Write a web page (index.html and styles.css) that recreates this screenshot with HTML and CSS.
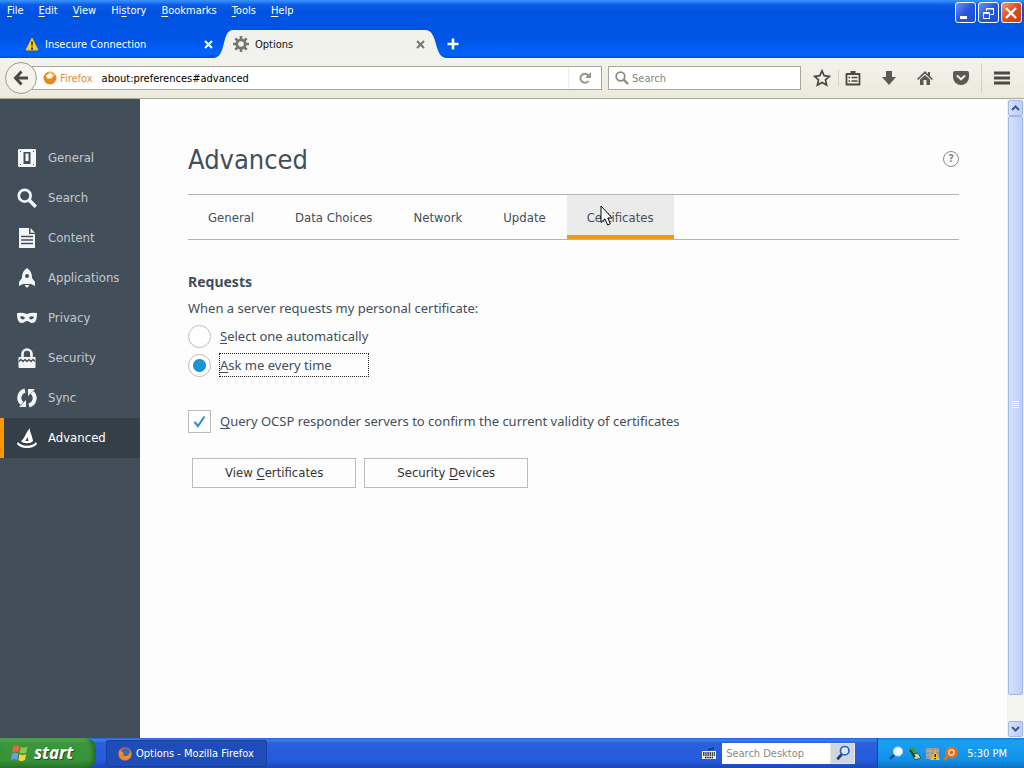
FILE: index.html
```html
<!DOCTYPE html>
<html lang="en">
<head>
<meta charset="utf-8">
<meta name="viewport" content="width=device-width, initial-scale=1">
<title>Options</title>
<link rel="stylesheet" href="styles.css">
</head>
<body>
<header class="titlebar">
  <div class="menurow">
    <nav class="menus">
      <button><u>F</u>ile</button>
      <button><u>E</u>dit</button>
      <button><u>V</u>iew</button>
      <button>Hi<u>s</u>tory</button>
      <button><u>B</u>ookmarks</button>
      <button><u>T</u>ools</button>
      <button><u>H</u>elp</button>
    </nav>
    <div class="winbtns">
      <button class="winbtn" aria-label="Minimize"><svg width="18" height="18"><rect x="4" y="12" width="7" height="3" fill="#fff"/></svg></button>
      <button class="winbtn" aria-label="Restore"><svg width="18" height="18" fill="none" stroke="#fff"><path d="M7.500 7V4.500h7v6h-3M7 5h8"/><path d="M4.500 8.500h6v6h-6zM4 9.500h7"/></svg></button>
      <button class="winbtn winbtn-close" aria-label="Close"><svg width="18" height="18" stroke="#fff" stroke-width="2.400"><path d="M4 4l10 10M14 4L4 14"/></svg></button>
    </div>
  </div>
  <div class="tabrow">
    <div class="tab">
      <svg width="14" height="14" viewBox="0 0 14 14"><path d="M7 1L13 13H1z" fill="#fbd130" stroke="#e8b820" stroke-linejoin="round"/><path d="M6 4.500h2L7.500 9.500h-1zM6 10.500h2v2H6z" fill="#3a3216"/></svg>
      <button class="tab-label">Insecure Connection</button>
      <button class="tab-close" aria-label="Close tab"><svg width="9" height="9" stroke="#fff" stroke-width="2"><path d="M1 1l7 7M8 1L1 8"/></svg></button>
    </div>
    <div class="tab tab-active">
      <svg class="curve" width="20" height="28" viewBox="0 0 20 28"><path d="M0 28C14 28 8 0 20 0V28z" fill="#f2f2ec"/></svg>
      <div class="tab-body">
        <svg width="16" height="16" viewBox="0 0 16 16"><circle cx="8" cy="8" r="4.200" fill="none" stroke="#76766f" stroke-width="2.800"/><path d="M8 0v3M8 13v3M0 8h3M13 8h3M2.300 2.300l2.200 2.200M11.500 11.500l2.200 2.200M13.700 2.300l-2.200 2.200M4.500 11.500l-2.200 2.200" stroke="#76766f" stroke-width="2.600"/></svg>
        <button class="tab-label">Options</button>
        <button class="tab-close" aria-label="Close tab"><svg width="9" height="9" stroke="#77776f" stroke-width="2"><path d="M1 1l7 7M8 1L1 8"/></svg></button>
      </div>
      <svg class="curve" width="22" height="28" viewBox="0 0 22 28"><path d="M0 0C14 0 8 28 22 28H0z" fill="#f2f2ec"/></svg>
    </div>
    <button class="newtab" aria-label="New tab"><svg width="12" height="12" stroke="#fff" stroke-width="2.600"><path d="M6 .5v11M.5 6h11"/></svg></button>
  </div>
</header>

<div class="toolbar">
  <div class="address">
    <button class="back" aria-label="Back"><svg width="16" height="16" viewBox="0 0 16 16" fill="none" stroke="#4b4a42" stroke-width="3"><path d="M15 8H3M8.500 1.500L2.500 8l6 6.500"/></svg></button>
    <div class="urlbox">
      <svg width="14" height="14" viewBox="0 0 14 14"><circle cx="7" cy="7" r="6.500" fill="#e68a1e"/><path d="M3 4c2 0 2-2 5-2 2 0 3 3 1 5-2 1-3 0-4 1-1-1-2-2-2-4z" fill="#fff6e4"/><path d="M5 1.500C8 0 12 2 12.500 6L10 4z" fill="#f7c56c"/></svg>
      <span class="identity">Firefox</span>
      <input class="url" type="text" aria-label="Address" value="about:preferences#advanced">
      <button class="reload" aria-label="Reload"><svg width="14" height="14" viewBox="0 0 14 14"><path d="M10.500 10A4.500 4.500 0 1 1 10.500 4.500" fill="none" stroke="#95958f" stroke-width="2"/><path d="M13 1v6H7z" fill="#95958f"/></svg></button>
    </div>
  </div>
  <label class="searchbox">
    <svg width="14" height="14" viewBox="0 0 14 14" fill="none" stroke="#8b8b87"><circle cx="5.500" cy="5.500" r="4.300" stroke-width="1.800"/><path d="M8.500 8.500l4.500 4.500" stroke-width="2.400"/></svg>
    <input type="text" placeholder="Search" aria-label="Search">
  </label>
  <div class="tools">
    <button aria-label="Bookmark"><svg width="18" height="18" viewBox="0 0 18 18"><path d="M9 1.800l2.200 4.900 5.200.6-3.900 3.500 1.100 5.200L9 13.400 4.400 16l1.100-5.200L1.600 7.300l5.200-.6z" fill="none" stroke="#4b4a42" stroke-width="1.700"/></svg></button>
    <span class="sep"></span>
    <button aria-label="Bookmarks list"><svg width="16" height="16" viewBox="0 0 16 16"><path d="M1.500 4h13v10.500h-13z" fill="none" stroke="#4b4a42" stroke-width="1.800" stroke-linejoin="round"/><path d="M5.500 3V1h5v2z" fill="#4b4a42"/><path d="M3.500 7.500H5M6.500 7.500h6M3.500 11H5M6.500 11h6" stroke="#4b4a42" stroke-width="1.500"/></svg></button>
    <button aria-label="Downloads"><svg width="16" height="16" viewBox="0 0 16 16"><path d="M5 1h6v6h4l-7 8-7-8h4z" fill="#5b5a52"/></svg></button>
    <button aria-label="Home"><svg width="16" height="16" viewBox="0 0 16 16" fill="#5b5a52"><path d="M8 1L0 9l1.200 1L8 3.600 14.800 10 16 9l-3-3V2h-2v2z"/><path d="M3 9.500L8 5l5 4.500V15H9.500v-5h-3v5H3z"/></svg></button>
    <button aria-label="Pocket"><svg width="16" height="16" viewBox="0 0 16 16"><path d="M2 1h12q2 0 2 2v4a8 8 0 0 1-16 0V3q0-2 2-2z" fill="#5b5a52"/><path d="M4.500 6L8 9.300 11.500 6" fill="none" stroke="#efeee6" stroke-width="2" stroke-linecap="round"/></svg></button>
    <span class="sep sep-menu"></span>
    <button class="menu" aria-label="Menu"><svg width="16" height="14" stroke="#4b4a42" stroke-width="3"><path d="M0 2h16M0 7h16M0 12h16"/></svg></button>
  </div>
</div>

<main class="view">
  <nav class="sidebar">
    <a href="#general"><svg viewBox="0 0 20 20" fill="#f4f6f8"><path fill-rule="evenodd" d="M2 1h16q1 0 1 1v16q0 1-1 1H2q-1 0-1-1V2q0-1 1-1zM6.500 4v12h7V4zM3 3v1h1V3zM16 3v1h1V3zM3 16v1h1v-1zM16 16v1h1v-1z"/><path d="M8.500 5.500h3V13h-3z"/></svg>General</a>
    <a href="#search"><svg viewBox="0 0 20 20" fill="none" stroke="#f4f6f8"><circle cx="7.700" cy="7.700" r="5.900" stroke-width="2.700"/><path d="M12 12l6.800 6.800" stroke-width="3.500"/></svg>Search</a>
    <a href="#content"><svg viewBox="0 0 20 20"><path d="M2 0h10v6h6v14H2z" fill="#f4f6f8"/><path d="M13.500 0L18 4.700h-4.500z" fill="#f4f6f8"/><path d="M4 8.500h12M4 12h12M4 15.500h12" stroke="#424f5a" stroke-width="1.400"/></svg>Content</a>
    <a href="#applications"><svg viewBox="0 0 20 20" fill="#f4f6f8"><path fill-rule="evenodd" d="M10 0c3 2 5 5 5 9v1l3 4v4l-4-2H6l-4 2v-4l3-4V9c0-4 2-7 5-9zM10 6a2 2 0 1 0 0 4 2 2 0 0 0 0-4z"/><path d="M7.500 17h5L10 20z"/></svg>Applications</a>
    <a href="#privacy"><svg viewBox="0 0 20 20" fill="#f4f6f8"><path fill-rule="evenodd" d="M0 5q5-1 10 1 5-2 10-1c0 6-1 10-5 10-2 0-3-2-5-2s-3 2-5 2C1 15 0 11 0 5zM3 9c1 3 4 3 5 1-1-2-4-2-5-1zM17 9c-1-1-4-1-5 1 1 2 4 2 5-1z"/></svg>Privacy</a>
    <a href="#security"><svg viewBox="0 0 20 20"><path d="M5.500 10V6a4.500 4.500 0 0 1 9 0v4" fill="none" stroke="#f4f6f8" stroke-width="2.600"/><path d="M1.500 9h17v10q0 1-1 1h-15q-1 0-1-1z" fill="#f4f6f8"/><path d="M2 13.500l2-2 2 2 2-2 2 2 2-2 2 2 2-2 2 2" fill="none" stroke="#424f5a" stroke-width="1.300"/></svg>Security</a>
    <a href="#sync"><svg viewBox="0 0 20 20"><path d="M8 2.500a7.500 7.500 0 0 0-3 13M12 17.500a7.500 7.500 0 0 0 3-13" fill="none" stroke="#f4f6f8" stroke-width="4"/><path d="M2 19h7v-7zM18 1h-7v7z" fill="#f4f6f8"/></svg>Sync</a>
    <a class="current" href="#advanced"><svg viewBox="0 0 20 20" fill="#fff"><path fill-rule="evenodd" d="M13 0c-1 3 2 6 3 13-2 3-10 3-12 0 3-1 5-9 9-13zM10.500 9l-2 4h3z"/><path d="M1 14c4 5 14 5 18 0l1 2c-4 5.500-16 5.500-20 0z"/></svg>Advanced</a>
  </nav>

  <section class="pane">
    <div class="heading">
      <h1>Advanced</h1>
      <button class="help" aria-label="Help">?</button>
    </div>
    <div class="subtabs" role="tablist">
      <button role="tab">General</button>
      <button role="tab">Data Choices</button>
      <button role="tab">Network</button>
      <button role="tab">Update</button>
      <button role="tab" class="selected" aria-selected="true">Certificates
        <svg class="pointer" width="13" height="22" viewBox="0 0 13 22"><path d="M1 1v16.500l4-3.700L7.600 20l2.700-1.200L7.800 13H12.200z" fill="#fff" stroke="#000"/></svg>
      </button>
    </div>
    <h2>Requests</h2>
    <p class="caption" id="cap">When a server requests my personal certificate:</p>
    <div class="radios" role="radiogroup" aria-labelledby="cap">
      <div class="choice"><input type="radio" name="cert" id="auto"><label for="auto"><u>S</u>elect one automatically</label></div>
      <div class="choice"><input type="radio" name="cert" id="ask" checked><label class="focused" for="ask"><u>A</u>sk me every time</label></div>
    </div>
    <div class="choice ocsp">
      <span class="check"><input type="checkbox" id="ocsp" checked><svg width="13" height="13" viewBox="0 0 13 13"><path d="M1.500 7l3.500 4L11.500 1.500" fill="none" stroke="#2a90c8" stroke-width="2"/></svg></span>
      <label for="ocsp"><u>Q</u>uery OCSP responder servers to confirm the current validity of certificates</label>
    </div>
    <div class="actions">
      <button>View <u>C</u>ertificates</button>
      <button>Security <u>D</u>evices</button>
    </div>
  </section>

  <div class="scrollbar">
    <button aria-label="Scroll up"><svg width="9" height="6"><path d="M1 5l3.500-3.500L8 5" fill="none" stroke="#42578c" stroke-width="2"/></svg></button>
    <div class="thumb"><svg width="7" height="8" stroke="#edf3ff"><path d="M0 .5h7M0 2.500h7M0 4.500h7M0 6.500h7"/></svg></div>
    <div class="track"></div>
    <button aria-label="Scroll down"><svg width="9" height="6"><path d="M1 1l3.500 3.500L8 1" fill="none" stroke="#42578c" stroke-width="2"/></svg></button>
  </div>
</main>

<footer class="taskbar">
  <button class="start"><svg width="20" height="20" viewBox="0 0 18 18"><path d="M3 3c2-1.500 4-1.200 5.500 0L7.500 8.500C6 7.300 4 7.300 2 8.500z" fill="#e8653c"/><path d="M9.700 3.500c2 1 4 1 6-.3l-1 5.300c-2 1.300-4 1.300-6 .3z" fill="#8cc84a"/><path d="M1.700 9.800c2-1.300 4-1.200 5.600 0l-1 5.500c-1.500-1.200-3.500-1.200-5.500 0z" fill="#6c9cf0"/><path d="M8.500 10.200c2 1 4 1 6-.3l-1 5.400c-2 1.300-4 1.300-6 .3z" fill="#fbd040"/></svg>start</button>
  <button class="task"><svg width="14" height="14" viewBox="0 0 14 14"><circle cx="7" cy="7" r="6.700" fill="#e8642a"/><circle cx="7.500" cy="5.500" r="4.200" fill="#2c6cb8"/><path d="M1 4c1-1 2 0 3 1 2 0 2 1 1 2 1 3 4 3 6 0l2-3c1 5-1 9-6 9C2 13 0 8 1 4z" fill="#f28a2c"/></svg>Options - Mozilla Firefox</button>
  <div class="deskband">
    <svg width="14" height="14" viewBox="0 0 14 14"><path d="M7 5V3h4V1" fill="none" stroke="#0d1c50"/><path d="M0 5h14v8H0z" fill="#f2f2f2"/><path d="M1 7h12M1 9h12M3 11.500h8" stroke="#151515" stroke-width="1.300" stroke-dasharray="1.500 .7"/></svg>
    <div class="desksearch">
      <input type="text" placeholder="Search Desktop" aria-label="Search Desktop">
      <button aria-label="Search"><svg width="16" height="16" viewBox="0 0 14 14"><path d="M6 8l-4 4.500" stroke="#27407c" stroke-width="2.500"/><circle cx="8.500" cy="5" r="3.700" fill="#d8ecff" stroke="#2f63b8" stroke-width="1.500"/></svg></button>
    </div>
  </div>
  <div class="tray">
    <svg width="15" height="15" viewBox="0 0 15 15"><path d="M5 9l-4 4" stroke="#173a8c" stroke-width="2.400"/><circle cx="9" cy="5.500" r="4.600" fill="#eef6ff" stroke="#b8d4f4"/></svg>
    <svg width="15" height="15" viewBox="0 0 15 15"><path d="M2 2l5-1 2 6-5 1z" fill="#3a9a3c"/><path d="M5 8l6-1 3 5-6 2z" fill="#c8d0c8" stroke="#2a5a3c"/><path d="M3 4l5 7" stroke="#184a20" stroke-width="2"/></svg>
    <svg width="15" height="15" viewBox="0 0 15 15"><path d="M1 2h13v11H1z" fill="#8c9cae"/><path d="M1 5h13M1 9h13M5 2v11M10 2v11" stroke="#e0a860"/><path d="M10 5l5 9H5z" fill="#f7bc24"/><path d="M9.500 8h1.500v3H9.500zM9.500 12h1.500v1.200H9.500z" fill="#33200a"/></svg>
    <svg width="15" height="15" viewBox="0 0 15 15"><circle cx="8.500" cy="6.500" r="4.700" fill="#f4c89a" stroke="#e0701c" stroke-width="2.600"/><circle cx="8.500" cy="6.500" r="1.700" fill="#d0641c"/><path d="M5 10l-4 4" stroke="#e0701c" stroke-width="3"/></svg>
    <time>5:30 PM</time>
  </div>
</footer>
</body>
</html>
```
FILE: styles.css
```css
* { box-sizing: border-box; }

body {
  margin: 0;
  min-height: 100vh;
  display: flex;
  flex-direction: column;
  font-family: "DejaVu Sans Condensed", "Noto Sans", sans-serif;
  font-size: 11px;
  color: #000;
  background: #fdfdfd;
}

button, input { font: inherit; color: inherit; }
button { border: 0; padding: 0; background: none; white-space: nowrap; }
input { min-width: 0; border: 0; padding: 0; background: none; outline: 0; }
svg { flex: none; display: block; }
u { text-decoration: underline; text-underline-offset: 2px; }

/* Title bar */
.titlebar {
  background: linear-gradient(#3b96ff 0, #0a5be8 5px, #0053e1 12px, #0055e8 40px, #0063fb 54px, #0050d8 100%);
  color: #fff;
}
.menurow { display: flex; justify-content: space-between; height: 30px; }
.menus { display: flex; gap: 15px; height: 20px; padding-left: 7px; }
.winbtns { display: flex; gap: 2px; padding: 2px 2px 0 0; }
.winbtn {
  width: 21px;
  height: 21px;
  border: 1px solid #fff;
  border-radius: 3px;
  background: linear-gradient(135deg, #6c94f4, #2458dc 50%, #1c50d0);
}
.winbtn-close { background: linear-gradient(135deg, #f09878, #e04c1c 50%, #c83c10); }

.tabrow { display: flex; height: 28px; padding-left: 25px; }
.tab { display: flex; align-items: center; gap: 6px; flex: 0 1 188px; }
.tab-label { flex: 1; text-align: left; }
.tab-active { flex: 0 1 234px; gap: 0; color: #111; }
.tab-body { flex: 1; display: flex; align-items: center; gap: 6px; height: 28px; background: #f2f2ec; }

/* Navigation toolbar */
.toolbar {
  display: flex;
  align-items: center;
  gap: 6px;
  height: 41px;
  padding: 0 14px 0 5px;
  border-bottom: 1px solid #aaa897;
  background: linear-gradient(#f3f3ee, #ece9dc);
}
.address { flex: 1; display: flex; align-items: center; }
.back {
  display: grid;
  place-items: center;
  flex: none;
  width: 32px;
  height: 32px;
  margin-right: -5px;
  border: 1px solid #9e9b91;
  border-radius: 50%;
  background: #f3f2eb;
  z-index: 1;
}
.urlbox, .searchbox {
  display: flex;
  align-items: center;
  height: 24px;
  border: 1px solid #a9a79d;
  background: #fff;
}
.urlbox { flex: 1; gap: 3px; padding-left: 10px; }
.identity { color: #df8c3a; }
.url { flex: 1; margin-left: 6px; }
.reload {
  display: grid;
  place-items: center;
  width: 33px;
  height: 22px;
  border-left: 1px solid #efefed;
}
.searchbox { width: 193px; gap: 3px; padding-left: 6px; }
.searchbox input { flex: 1; }
.searchbox input::placeholder { color: #85857f; opacity: 1; }
.tools { display: flex; align-items: center; gap: 20px; padding-left: 6px; }
.tools .sep { width: 1px; height: 16px; margin: 0 -14px 0 -13px; background: #d4d2c6; }
.tools .sep-menu { height: 30px; margin: 0 -8px; }

/* Preferences page */
.view { flex: 1; display: flex; font-size: 13px; color: #424e5a; }
.sidebar { width: 140px; padding-top: 39px; background: #424f5a; }
.sidebar a {
  display: flex;
  align-items: center;
  gap: 11px;
  height: 40px;
  padding: 0 0 1px 17px;
  color: #c2c8ce;
  text-decoration: none;
}
.sidebar svg { width: 20px; height: 20px; }
.sidebar .current { padding-left: 13px; border-left: 4px solid #ff9500; background: #343f48; color: #fff; }

.pane { flex: 1; padding: 40px 48px 0; }
.heading { display: flex; justify-content: space-between; align-items: center; height: 40px; }
h1 { margin: 0; padding-top: 2px; font-size: 27px; font-weight: normal; line-height: 40px; }
.help {
  width: 16px;
  height: 16px;
  border: 1px solid #888c90;
  border-radius: 50%;
  font-size: 11px;
  font-weight: bold;
  line-height: 14px;
  color: #888c90;
}
.subtabs {
  display: flex;
  gap: 1px;
  height: 46px;
  margin-top: 15px;
  border: solid #b4b4b4;
  border-width: 1px 0;
}
.subtabs button { padding: 0 20px; }
.subtabs .selected { position: relative; background: #ebebeb; box-shadow: inset 0 -4px #ef9812; }
.pointer { position: absolute; left: 33px; top: 10px; }

h2, .caption, .choice { font-family: "Noto Sans", sans-serif; }
h2 { margin: 32px 0 0; font-size: 14px; line-height: 20px; }
.caption { margin: 6px 0; line-height: 20px; }
.radios { display: grid; gap: 5px; width: max-content; }
.choice { display: flex; align-items: center; gap: 8px; }
.choice label { line-height: 22px; border: 1px dotted transparent; }
.choice .focused { flex: 1; border-color: #222; }
.choice input {
  appearance: none;
  flex: none;
  width: 23px;
  height: 23px;
  margin: 0;
  border: 1px solid #bcbcbc;
  background: #fff;
}
.choice input[type="radio"] { border-radius: 50%; }
.choice input[type="radio"]:checked { background: radial-gradient(circle, #1b94d2 6px, #fff 7px); }
.check { display: grid; place-items: center; }
.check > * { grid-area: 1 / 1; pointer-events: none; }
.check input { pointer-events: auto; }
.ocsp { margin-top: 32px; }
.actions { display: flex; gap: 8px; margin: 25px 4px 0; }
.actions button { height: 30px; padding: 0 32px 1px; border: 1px solid #bcbcbc; background: #fdfdfd; color: #333; }

/* Scroll bar */
.scrollbar { display: flex; flex-direction: column; width: 17px; padding: 1px; background: #f4f4ee; }
.scrollbar button, .thumb {
  display: grid;
  place-items: center;
  border: 1px solid #a4b8e4;
  border-radius: 2px;
  background: linear-gradient(90deg, #d4e0fe, #bccdfa);
}
.scrollbar button { height: 16px; }
.thumb { flex: 22; }
.track { flex: 1; }

/* Taskbar */
.taskbar {
  display: flex;
  align-items: stretch;
  height: 30px;
  background: linear-gradient(#2a5fd0 0, #3b80f0 2px, #2a5fdc 5px, #245bdc 22px, #1c48b4 100%);
  color: #fff;
}
.start {
  display: flex;
  align-items: center;
  gap: 4px;
  width: 96px;
  padding-left: 10px;
  border-radius: 0 10px 10px 0;
  background: linear-gradient(#6cb86c 0, #3c963c 5px, #379337 22px, #2c762c 100%);
  box-shadow: inset -3px 0 4px #226a2a;
  font-family: "Noto Sans", sans-serif;
  font-size: 17px;
  line-height: 24px;
  font-weight: bold;
  font-style: italic;
  text-shadow: 1px 1px 1px #224422;
}
.task {
  display: flex;
  align-items: center;
  gap: 4px;
  width: 161px;
  margin: 2px 0 1px 10px;
  padding-left: 11px;
  border: 1px solid #1840a0;
  border-radius: 2px;
  background: #1e4cb8;
}
.deskband { display: flex; align-items: center; gap: 6px; margin-left: auto; padding-right: 22px; }
.desksearch { display: flex; height: 21px; }
.desksearch input { width: 108px; padding-left: 4px; background: #fff; color: #555; }
.desksearch input::placeholder { color: #8a8a8a; opacity: 1; }
.desksearch button { display: grid; place-items: center; width: 25px; border: 1px solid #e8e6da; background: #cfd6e2; }
.tray {
  display: flex;
  align-items: center;
  gap: 3px;
  padding: 0 17px 0 11px;
  border-left: 1px solid #0c3c9c;
  background: linear-gradient(#1480d8 0, #18a0f4 3px, #1290e8 22px, #0f70c0 100%);
}
.tray time { margin-left: 6px; }
```
